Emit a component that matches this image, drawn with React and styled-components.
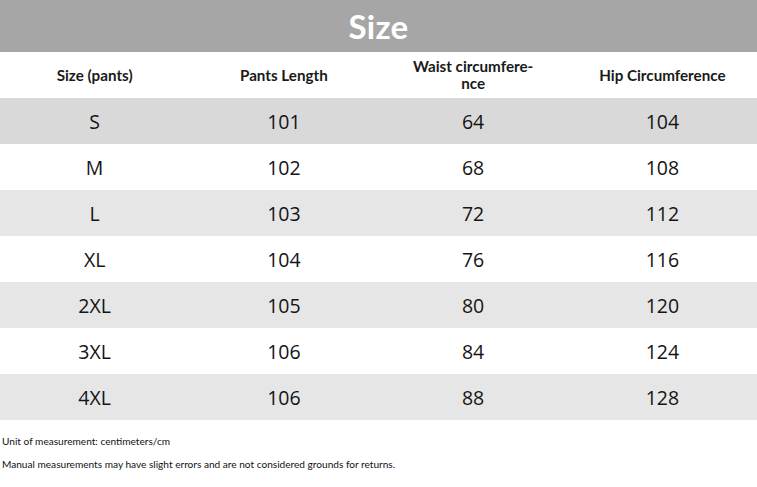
import React from "react";
import styled, { createGlobalStyle } from "styled-components";

const Global = createGlobalStyle`
  html, body { margin: 0; padding: 0; background: #ffffff; }
  body { width: 757px; height: 487px; overflow: hidden; }
`;

const Page = styled.div`
  width: 757px;
  display: flex;
  flex-direction: column;
`;

const TitleBar = styled.div`
  height: 52px;
  background: #a6a6a6;
  display: flex;
  align-items: center;
  justify-content: center;
  color: #ffffff;
  font-family: "Lato", "Open Sans", sans-serif;
  font-weight: 700;
  font-size: 33px;
  letter-spacing: 0.3px;
`;

const Row = styled.div`
  height: 46px;
  display: grid;
  grid-template-columns: repeat(4, 1fr);
  align-items: center;
  background: ${(p) => p.$bg || "#ffffff"};
`;

const HeadCell = styled.div`
  text-align: center;
  font-family: "Lato", sans-serif;
  font-weight: 700;
  font-size: 15.2px;
  line-height: 17px;
  color: #1a1a1a;
`;

const Cell = styled.div`
  text-align: center;
  font-family: "Open Sans", "Noto Sans", sans-serif;
  font-size: 19.5px;
  color: #141414;
`;

const Notes = styled.div`
  padding: 15px 0 0 2px;
  display: flex;
  flex-direction: column;
  gap: 10px;
  font-family: "Lato", sans-serif;
  font-size: 10.1px;
  line-height: 13px;
  color: #111111;
`;

const rows = [
  ["S", "101", "64", "104"],
  ["M", "102", "68", "108"],
  ["L", "103", "72", "112"],
  ["XL", "104", "76", "116"],
  ["2XL", "105", "80", "120"],
  ["3XL", "106", "84", "124"],
  ["4XL", "106", "88", "128"],
];

const bgFor = (i) => (i === 0 ? "#d9d9d9" : i % 2 === 0 ? "#e6e6e6" : "#ffffff");

export default function App() {
  return (
    <Page>
      <Global />
      <TitleBar>Size</TitleBar>
      <Row>
        <HeadCell>Size (pants)</HeadCell>
        <HeadCell>Pants Length</HeadCell>
        <HeadCell>
          Waist circumfere-
          <br />
          nce
        </HeadCell>
        <HeadCell>Hip Circumference</HeadCell>
      </Row>
      {rows.map((r, i) => (
        <Row key={r[0]} $bg={bgFor(i)}>
          {r.map((v, j) => (
            <Cell key={j}>{v}</Cell>
          ))}
        </Row>
      ))}
      <Notes>
        <div>Unit of measurement: centimeters/cm</div>
        <div>Manual measurements may have slight errors and are not considered grounds for returns.</div>
      </Notes>
    </Page>
  );
}
